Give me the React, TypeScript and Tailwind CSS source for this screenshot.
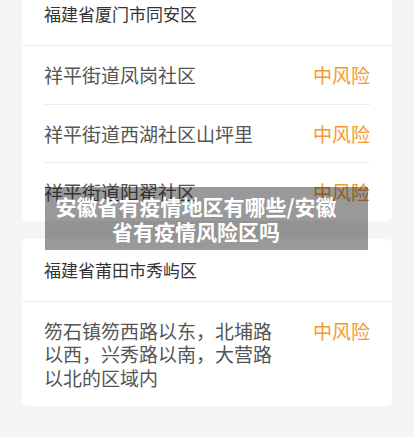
import React from 'react'

type Row = { name: string; level: string }

const groups: { title: string; rows: Row[] }[] = [
  {
    title: '福建省厦门市同安区',
    rows: [
      { name: '祥平街道凤岗社区', level: '中风险' },
      { name: '祥平街道西湖社区山坪里', level: '中风险' },
      { name: '祥平街道阳翟社区', level: '中风险' },
    ],
  },
  {
    title: '福建省莆田市秀屿区',
    rows: [
      { name: '笏石镇笏西路以东，北埔路以西，兴秀路以南，大营路以北的区域内', level: '中风险' },
    ],
  },
]

const font = { fontFamily: '"Noto Sans CJK SC", "Noto Sans", sans-serif' }

function Card({ title, rows }: { title: string; rows: Row[] }) {
  return (
    <div className="bg-white rounded-[5px]">
      <div className="h-[63px] flex items-center px-[22px] border-b border-[#ececec]">
        <span className="text-[17px] leading-6 text-[#333]">{title}</span>
      </div>
      <div className="px-[22px]">
        {rows.map((r, i) => (
          <div
            key={i}
            className={
              'flex justify-between items-start py-[17px] ' +
              (i < rows.length - 1 ? 'border-b border-[#ececec]' : '')
            }
          >
            <span className="text-[19px] leading-[23.5px] text-[#555] max-w-[232px]">{r.name}</span>
            <span className="text-[19px] leading-[23.5px] text-[#f29b2c]">{r.level}</span>
          </div>
        ))}
      </div>
    </div>
  )
}

export default function App() {
  return (
    <div className="relative w-[414px] h-[437px] overflow-hidden bg-[#f5f5f5]" style={font}>
      <div className="px-[22px] -mt-[17px] flex flex-col gap-[18px]">
        {groups.map((g, i) => (
          <Card key={i} title={g.title} rows={g.rows} />
        ))}
      </div>

      {/* 标题遮罩 */}
      <div className="absolute left-[45px] top-[187px] w-[323px] h-[63px] bg-black/40 flex items-center pl-[8px] pr-[29px]">
        <p className="w-full text-center text-white font-bold text-[21px] leading-[25px]">
          安徽省有疫情地区有哪些/安徽省有疫情风险区吗
        </p>
      </div>
    </div>
  )
}
